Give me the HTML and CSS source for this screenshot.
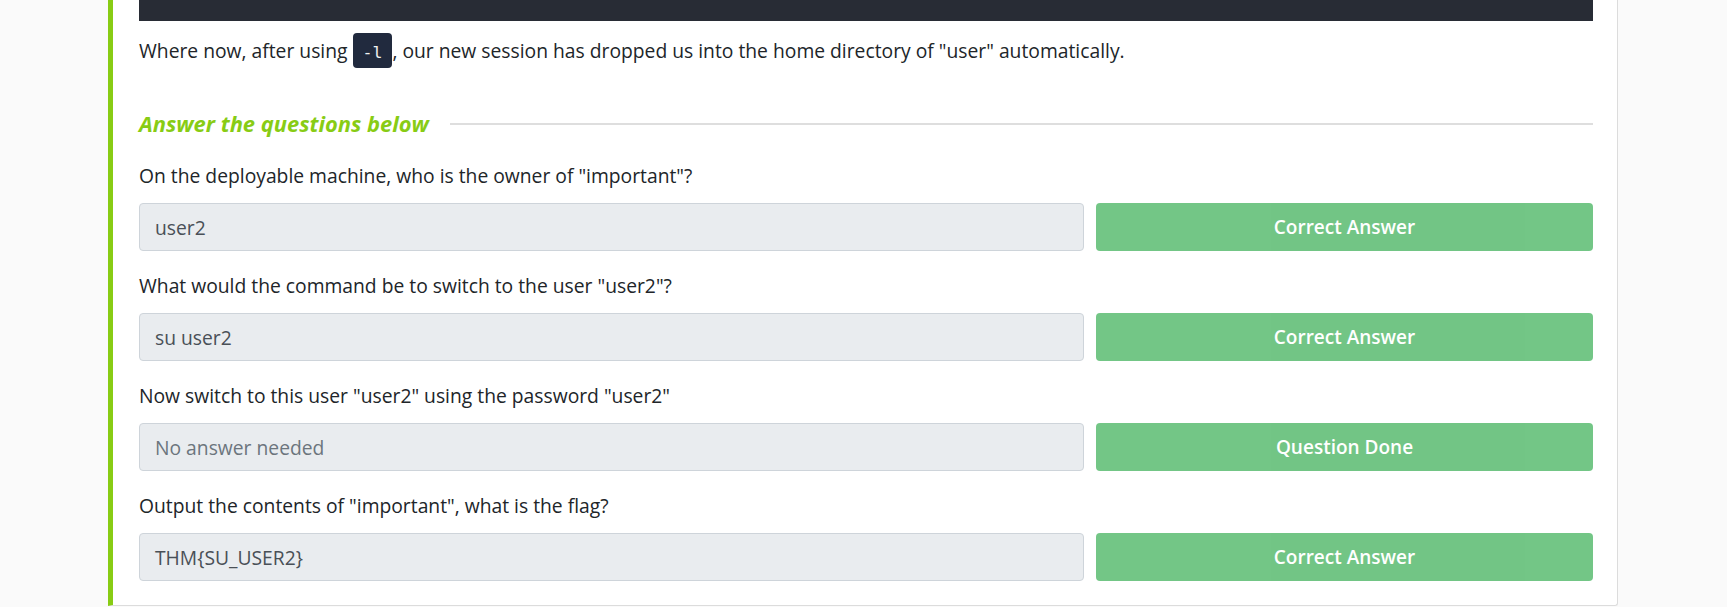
FILE: index.html
```html
<!DOCTYPE html>
<html lang="en">
<head>
<meta charset="utf-8">
<title>Answer the questions below</title>
<link rel="stylesheet" href="styles.css">
</head>
<body>
<div class="card">
  <pre class="terminal"></pre>
  <p class="para">Where now, after using <code class="inline-code">-l</code>, our new session has dropped us into the home directory of "user" automatically.</p>
  <div class="section-title">
    <h4 class="section-heading">Answer the questions below</h4>
    <div class="section-rule"></div>
  </div>
  <div class="question">
    <p class="question-text">On the deployable machine, who is the owner of "important"?</p>
    <div class="answer-row">
      <div class="answer-input">user2</div>
      <button class="answer-btn">Correct Answer</button>
    </div>
  </div>
  <div class="question">
    <p class="question-text">What would the command be to switch to the user "user2"?</p>
    <div class="answer-row">
      <div class="answer-input">su user2</div>
      <button class="answer-btn">Correct Answer</button>
    </div>
  </div>
  <div class="question">
    <p class="question-text">Now switch to this user "user2" using the password "user2"</p>
    <div class="answer-row">
      <div class="answer-input placeholder">No answer needed</div>
      <button class="answer-btn">Question Done</button>
    </div>
  </div>
  <div class="question">
    <p class="question-text">Output the contents of "important", what is the flag?</p>
    <div class="answer-row">
      <div class="answer-input">THM{SU_USER2}</div>
      <button class="answer-btn">Correct Answer</button>
    </div>
  </div>
</div>
</body>
</html>
```
FILE: styles.css
```css
html, body {
  margin: 0;
  padding: 0;
  background: #fafafa;
}
body {
  font-family: "Open Sans", "Noto Sans", "Liberation Sans", sans-serif;
  font-size: 19.3px;
  color: #212529;
  height: 607px;
  overflow: hidden;
}
.card {
  margin-left: 108px;
  width: 1510px;
  box-sizing: border-box;
  background: #fff;
  border-left: 5px solid #88cc14;
  border-right: 1px solid #dcdcdc;
  border-bottom: 1px solid #dcdcdc;
  border-bottom-right-radius: 3px;
  padding: 0 24px 24px 26px;
}
.terminal {
  margin: 0;
  height: 21px;
  background: #282c35;
}
.para {
  margin: 16px 0 0;
  line-height: 28px;
}
.inline-code {
  font-family: "DejaVu Sans Mono", "Liberation Mono", monospace;
  font-size: 16.5px;
  background: #212a3e;
  color: #f2f2f2;
  padding: 10px 10px 6px;
  border-radius: 4px;
}
.section-title {
  display: flex;
  align-items: center;
  margin-top: 42px;
  height: 30px;
}
.section-heading {
  margin: 0;
  font-size: 21.9px;
  font-weight: 700;
  font-style: italic;
  color: #88cc14;
  line-height: 30px;
}
.section-rule {
  flex: 1;
  height: 2px;
  background: #dedede;
  margin-left: 21px;
}
.question {
  padding-top: 23px;
}
.question + .question {
  padding-top: 21px;
}
.question-text {
  margin: 0 0 13px;
  line-height: 28px;
}
.answer-row {
  display: grid;
  grid-template-columns: 1fr 497px;
  gap: 12px;
}
.answer-input {
  height: 48px;
  box-sizing: border-box;
  background: #e9ecef;
  border: 1px solid #ced4da;
  border-radius: 4px;
  padding: 0 15px;
  display: flex;
  align-items: center;
  color: #495057;
  font-size: 19.3px;
}
.answer-input.placeholder {
  color: #6c757d;
}
.answer-btn {
  height: 48px;
  border: none;
  border-radius: 4px;
  background: #28a745;
  opacity: 0.65;
  color: #fff;
  font-family: inherit;
  font-size: 19px;
  font-weight: 600;
  padding: 0;
}
```
